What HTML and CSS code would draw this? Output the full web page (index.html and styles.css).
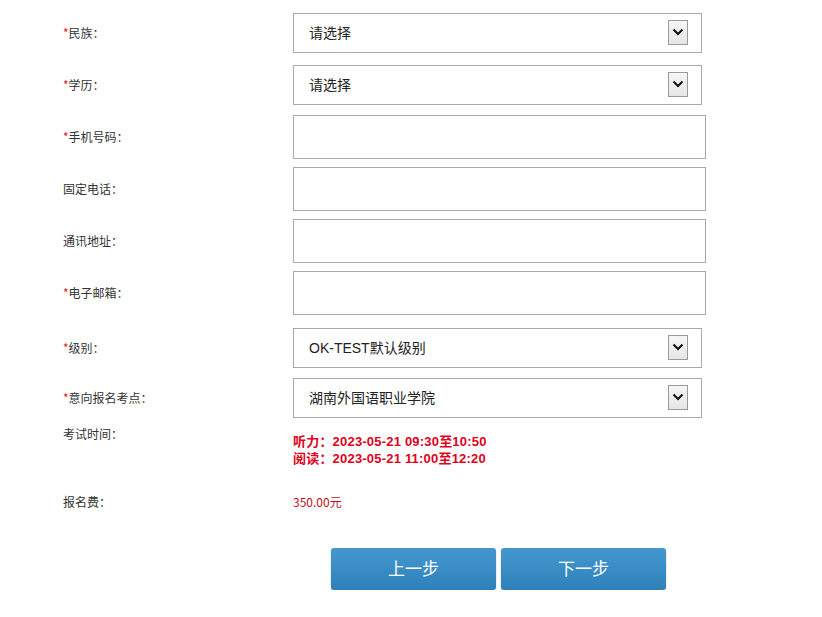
FILE: index.html
```html
<!DOCTYPE html>
<html lang="zh-CN">
<head>
<meta charset="utf-8">
<title>报名信息</title>
<link rel="stylesheet" href="styles.css">
</head>
<body>
<div class="form">
  <div class="row">
    <div class="label"><span class="req">*</span>民族：</div>
    <div class="select"><span class="sel-text">请选择</span><span class="arrow"><svg width="12" height="8" viewBox="0 0 12 8"><path d="M1.5 1.5 L6 6 L10.5 1.5" fill="none" stroke="#111" stroke-width="2"/></svg></span></div>
  </div>
  <div class="row">
    <div class="label"><span class="req">*</span>学历：</div>
    <div class="select"><span class="sel-text">请选择</span><span class="arrow"><svg width="12" height="8" viewBox="0 0 12 8"><path d="M1.5 1.5 L6 6 L10.5 1.5" fill="none" stroke="#111" stroke-width="2"/></svg></span></div>
  </div>
  <div class="row">
    <div class="label"><span class="req">*</span>手机号码：</div>
    <div class="input"></div>
  </div>
  <div class="row">
    <div class="label">固定电话：</div>
    <div class="input"></div>
  </div>
  <div class="row">
    <div class="label">通讯地址：</div>
    <div class="input"></div>
  </div>
  <div class="row">
    <div class="label"><span class="req">*</span>电子邮箱：</div>
    <div class="input"></div>
  </div>
  <div class="row row-level">
    <div class="label"><span class="req">*</span>级别：</div>
    <div class="select"><span class="sel-text latin">OK-TEST默认级别</span><span class="arrow"><svg width="12" height="8" viewBox="0 0 12 8"><path d="M1.5 1.5 L6 6 L10.5 1.5" fill="none" stroke="#111" stroke-width="2"/></svg></span></div>
  </div>
  <div class="row row-site">
    <div class="label"><span class="req">*</span>意向报名考点：</div>
    <div class="select"><span class="sel-text">湖南外国语职业学院</span><span class="arrow"><svg width="12" height="8" viewBox="0 0 12 8"><path d="M1.5 1.5 L6 6 L10.5 1.5" fill="none" stroke="#111" stroke-width="2"/></svg></span></div>
  </div>
  <div class="row-time">
    <div class="label">考试时间：</div>
    <div class="times">
      <div>听力：2023-05-21 09:30至10:50</div>
      <div>阅读：2023-05-21 11:00至12:20</div>
    </div>
  </div>
  <div class="row-fee">
    <div class="label">报名费：</div>
    <div class="fee">350.00元</div>
  </div>
  <div class="actions">
    <button class="btn" type="button">上一步</button>
    <button class="btn" type="button">下一步</button>
  </div>
</div>
</body>
</html>
```
FILE: styles.css
```css
html, body {
  margin: 0;
  padding: 0;
  background: #fff;
}
body {
  font-family: "Noto Sans CJK SC", "Liberation Sans", sans-serif;
  color: #333;
}
.form {
  padding: 7px 0 0 63px;
}
.row {
  display: grid;
  grid-template-columns: 230px auto;
  align-items: center;
  height: 52px;
}
.row-level {
  margin-top: 3px;
}
.row-site {
  margin-top: -2px;
}
.label {
  font-size: 12px;
  line-height: 16px;
  color: #333;
}
.req {
  color: #e02020;
}
.select {
  box-sizing: border-box;
  width: 409px;
  height: 40px;
  border: 1px solid #a9a9a9;
  display: flex;
  align-items: center;
  justify-content: space-between;
  padding: 0 13px 2px 15px;
  background: #fff;
}
.sel-text {
  font-size: 14px;
  color: #222;
}
.latin {
  font-family: "Liberation Sans", "Noto Sans CJK SC", sans-serif;
  font-size: 14px;
}
.arrow {
  box-sizing: border-box;
  width: 20px;
  height: 25px;
  border: 1px solid #9a9a9a;
  background: linear-gradient(#f6f6f6, #e6e6e6);
  display: flex;
  align-items: center;
  justify-content: center;
}
.input {
  box-sizing: border-box;
  width: 413px;
  height: 44px;
  border: 1px solid #a9a9a9;
  background: #fff;
}
.row-time {
  display: grid;
  grid-template-columns: 230px auto;
  margin-top: 2px;
}
.times {
  padding-top: 7px;
  font-family: "Liberation Sans", "Noto Sans CJK SC", sans-serif;
  font-weight: bold;
  font-size: 13px;
  letter-spacing: 0.2px;
  line-height: 17px;
  color: #e0001b;
}
.row-fee {
  display: grid;
  grid-template-columns: 230px auto;
  align-items: center;
  margin-top: 27px;
}
.fee {
  font-size: 12px;
  line-height: 16px;
  color: #c0101a;
}
.actions {
  display: flex;
  gap: 5px;
  padding-left: 268px;
  margin-top: 38px;
}
.btn {
  width: 165px;
  height: 42px;
  border: none;
  border-radius: 3px;
  background: linear-gradient(#4598cf, #2f80b9);
  box-shadow: 0 1px 2px rgba(0, 0, 0, 0.25);
  color: #fff;
  font-family: "Noto Sans CJK SC", sans-serif;
  font-size: 17px;
  padding: 0 0 3px;
  cursor: pointer;
}
```
